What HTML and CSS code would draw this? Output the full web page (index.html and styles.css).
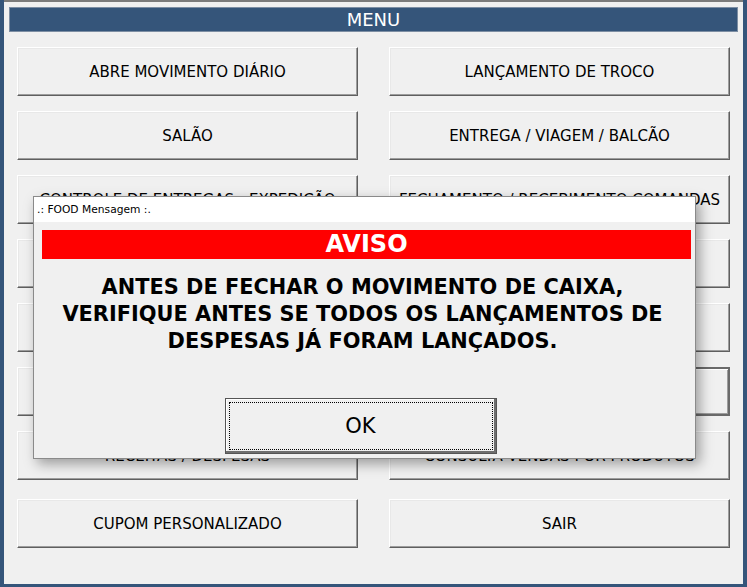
FILE: index.html
```html
<!DOCTYPE html>
<html lang="pt-BR">
<head>
<meta charset="utf-8">
<title>MENU</title>
<link rel="stylesheet" href="styles.css">
</head>
<body>
<div class="window">
  <div class="panel">
    <div class="menu-title">MENU</div>
    <div class="grid">
      <button class="btn">ABRE MOVIMENTO DIÁRIO</button>
      <button class="btn">LANÇAMENTO DE TROCO</button>
      <button class="btn">SALÃO</button>
      <button class="btn">ENTREGA / VIAGEM / BALCÃO</button>
      <button class="btn">CONTROLE DE ENTREGAS - EXPEDIÇÃO</button>
      <button class="btn">FECHAMENTO / RECEBIMENTO COMANDAS</button>
      <button class="btn">CADASTROS</button>
      <button class="btn">CONTAS A PAGAR / RECEBER</button>
      <button class="btn">RELATÓRIOS</button>
      <button class="btn">CONSULTA DE VENDAS</button>
      <button class="btn">SANGRIA / SUPRIMENTO</button>
      <button class="btn btn-default">FECHA MOVIMENTO DIÁRIO</button>
      <button class="btn">RECEITAS / DESPESAS</button>
      <button class="btn">CONSULTA VENDAS POR PRODUTOS</button>
      <button class="btn btn-last">CUPOM PERSONALIZADO</button>
      <button class="btn btn-last">SAIR</button>
    </div>
  </div>
</div>

<div class="dialog">
  <div class="dialog-title">.: FOOD Mensagem :.</div>
  <div class="dialog-body">
    <div class="aviso">AVISO</div>
    <div class="message">ANTES DE FECHAR O MOVIMENTO DE CAIXA,<br>VERIFIQUE ANTES SE TODOS OS LANÇAMENTOS DE<br>DESPESAS JÁ FORAM LANÇADOS.</div>
    <div class="dialog-actions">
      <button class="ok"><span class="ok-focus">OK</span></button>
    </div>
  </div>
</div>
</body>
</html>
```
FILE: styles.css
```css
* { box-sizing: border-box; }

html, body {
  margin: 0;
  padding: 0;
  width: 747px;
  height: 587px;
  overflow: hidden;
}

body {
  font-family: "DejaVu Sans", Verdana, sans-serif;
  background: #35557a;
}

.window {
  width: 747px;
  height: 587px;
  background: #35557a;
  padding: 0 4px 3px 4px;
  display: flex;
  flex-direction: column;
}

.panel {
  flex: 1;
  background: #f0f0f0;
  border-top: 2px solid #7b7b7b;
  padding: 5px 5px 0 5px;
}

.menu-title {
  height: 25px;
  background: #35557a;
  border: 1px solid #7d8ea3;
  color: #fff;
  font-size: 18px;
  line-height: 23px;
  text-align: center;
}

.grid {
  margin: 15px 8px 0 8px;
  display: grid;
  grid-template-columns: 341px 341px;
  grid-template-rows: repeat(7, 49px) 53px;
  column-gap: 31px;
  row-gap: 15px;
}

.btn {
  font-family: "DejaVu Sans", Verdana, sans-serif;
  font-size: 15px;
  color: #000;
  background: #f0f0f0;
  border: 1px solid;
  border-color: #ffffff #5f5f5f #5f5f5f #ffffff;
  box-shadow: inset -1px -1px 0 #9d9d9d, inset 1px 1px 0 #e8e8e8;
  padding: 0;
  white-space: nowrap;
  text-align: center;
}

.btn-default {
  border: 2px solid #6a6a6a;
  box-shadow: inset 1px 1px 0 #ffffff, inset -1px -1px 0 #9d9d9d;
}

.btn-last {
  height: 49px;
  align-self: end;
}

.dialog {
  position: absolute;
  left: 33px;
  top: 196px;
  width: 663px;
  height: 263px;
  background: #f0f0f0;
  border: 1px solid #8a8a8a;
  box-shadow: 4px 5px 12px rgba(0, 0, 0, 0.35);
  display: flex;
  flex-direction: column;
}

.dialog-title {
  height: 25px;
  background: #ffffff;
  font-size: 10.7px;
  line-height: 25px;
  padding-left: 3px;
  color: #000;
}

.dialog-body {
  flex: 1;
  display: flex;
  flex-direction: column;
  padding: 8px 4px 4px 8px;
}

.aviso {
  height: 29px;
  background: #ff0000;
  color: #ffffff;
  font-weight: bold;
  font-size: 24px;
  line-height: 29px;
  text-align: center;
}

.message {
  margin-top: 15px;
  font-weight: bold;
  font-size: 20.9px;
  line-height: 27px;
  text-align: center;
  color: #000;
  padding-right: 8px;
}

.dialog-actions {
  margin-top: auto;
  display: flex;
  justify-content: center;
  padding-right: 12px;
}

.ok {
  width: 272px;
  height: 56px;
  padding: 3px;
  font-family: "DejaVu Sans", Verdana, sans-serif;
  font-size: 21px;
  color: #000;
  background: #f0f0f0;
  border: 1px solid #555555;
  box-shadow: inset -2px -2px 0 #6e6e6e, inset 1px 1px 0 #ffffff;
  display: flex;
}

.ok-focus {
  flex: 1;
  border: 1px dotted #000;
  display: flex;
  align-items: center;
  justify-content: center;
}
```
